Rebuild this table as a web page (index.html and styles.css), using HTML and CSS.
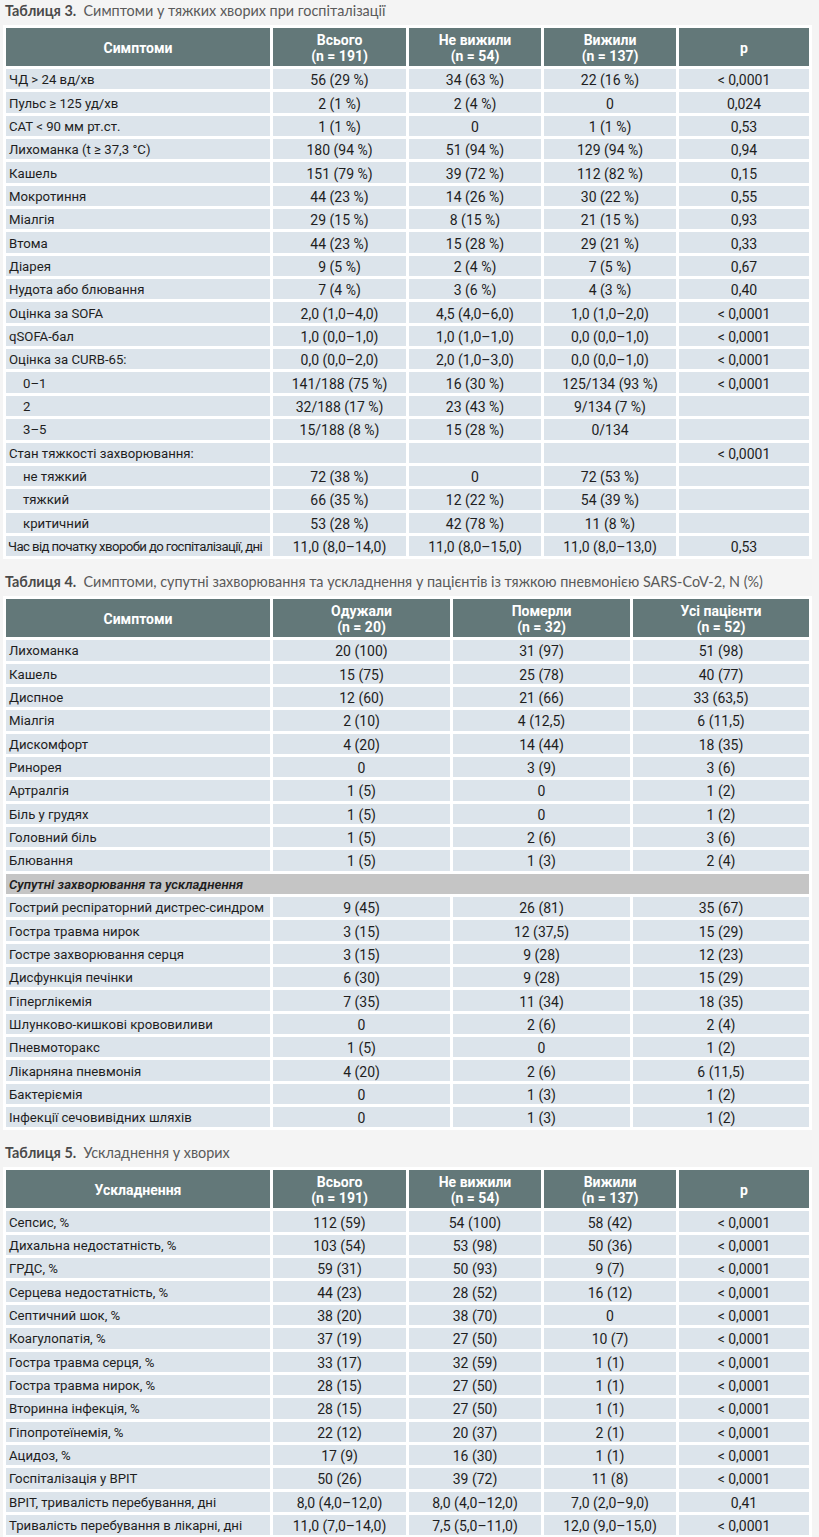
FILE: index.html
```html
<!DOCTYPE html>
<html lang="uk">
<head>
<meta charset="utf-8">
<title>Таблиці</title>
<link rel="stylesheet" href="styles.css">
</head>
<body>
<div class="page">

<div class="cap"><b>Таблиця 3.</b>&nbsp; Симптоми у тяжких хворих при госпіталізації</div>
<table class="t">
<colgroup><col class="c1"><col class="cn"><col class="cn2"><col class="cn2"><col></colgroup>
<thead><tr><th>Симптоми</th><th>Всього<br>(n = 191)</th><th>Не вижили<br>(n = 54)</th><th>Вижили<br>(n = 137)</th><th>p</th></tr></thead>
<tbody>
<tr><td>ЧД &gt; 24 вд/хв</td><td>56 (29 %)</td><td>34 (63 %)</td><td>22 (16 %)</td><td>&lt; 0,0001</td></tr>
<tr><td>Пульс ≥ 125 уд/хв</td><td>2 (1 %)</td><td>2 (4 %)</td><td>0</td><td>0,024</td></tr>
<tr><td>САТ &lt; 90 мм рт.ст.</td><td>1 (1 %)</td><td>0</td><td>1 (1 %)</td><td>0,53</td></tr>
<tr><td>Лихоманка (t ≥ 37,3 °C)</td><td>180 (94 %)</td><td>51 (94 %)</td><td>129 (94 %)</td><td>0,94</td></tr>
<tr><td>Кашель</td><td>151 (79 %)</td><td>39 (72 %)</td><td>112 (82 %)</td><td>0,15</td></tr>
<tr><td>Мокротиння</td><td>44 (23 %)</td><td>14 (26 %)</td><td>30 (22 %)</td><td>0,55</td></tr>
<tr><td>Міалгія</td><td>29 (15 %)</td><td>8 (15 %)</td><td>21 (15 %)</td><td>0,93</td></tr>
<tr><td>Втома</td><td>44 (23 %)</td><td>15 (28 %)</td><td>29 (21 %)</td><td>0,33</td></tr>
<tr><td>Діарея</td><td>9 (5 %)</td><td>2 (4 %)</td><td>7 (5 %)</td><td>0,67</td></tr>
<tr><td>Нудота або блювання</td><td>7 (4 %)</td><td>3 (6 %)</td><td>4 (3 %)</td><td>0,40</td></tr>
<tr><td>Оцінка за SOFA</td><td>2,0 (1,0–4,0)</td><td>4,5 (4,0–6,0)</td><td>1,0 (1,0–2,0)</td><td>&lt; 0,0001</td></tr>
<tr><td>qSOFA-бал</td><td>1,0 (0,0–1,0)</td><td>1,0 (1,0–1,0)</td><td>0,0 (0,0–1,0)</td><td>&lt; 0,0001</td></tr>
<tr><td>Оцінка за CURB-65:</td><td>0,0 (0,0–2,0)</td><td>2,0 (1,0–3,0)</td><td>0,0 (0,0–1,0)</td><td>&lt; 0,0001</td></tr>
<tr><td class="ind">0–1</td><td>141/188 (75 %)</td><td>16 (30 %)</td><td>125/134 (93 %)</td><td>&lt; 0,0001</td></tr>
<tr><td class="ind">2</td><td>32/188 (17 %)</td><td>23 (43 %)</td><td>9/134 (7 %)</td><td></td></tr>
<tr><td class="ind">3–5</td><td>15/188 (8 %)</td><td>15 (28 %)</td><td>0/134</td><td></td></tr>
<tr><td>Стан тяжкості захворювання:</td><td></td><td></td><td></td><td>&lt; 0,0001</td></tr>
<tr><td class="ind">не тяжкий</td><td>72 (38 %)</td><td>0</td><td>72 (53 %)</td><td></td></tr>
<tr><td class="ind">тяжкий</td><td>66 (35 %)</td><td>12 (22 %)</td><td>54 (39 %)</td><td></td></tr>
<tr><td class="ind">критичний</td><td>53 (28 %)</td><td>42 (78 %)</td><td>11 (8 %)</td><td></td></tr>
<tr><td class="tight">Час від початку хвороби до госпіталізації, дні</td><td>11,0 (8,0–14,0)</td><td>11,0 (8,0–15,0)</td><td>11,0 (8,0–13,0)</td><td>0,53</td></tr>
</tbody>
</table>

<div class="cap"><b>Таблиця 4.</b>&nbsp; Симптоми, супутні захворювання та ускладнення у пацієнтів із тяжкою пневмонією SARS-CoV-2, N (%)</div>
<table class="t">
<colgroup><col class="c1"><col class="c4"><col class="c4"><col></colgroup>
<thead><tr><th>Симптоми</th><th>Одужали<br>(n = 20)</th><th>Померли<br>(n = 32)</th><th>Усі пацієнти<br>(n = 52)</th></tr></thead>
<tbody>
<tr><td>Лихоманка</td><td>20 (100)</td><td>31 (97)</td><td>51 (98)</td></tr>
<tr><td>Кашель</td><td>15 (75)</td><td>25 (78)</td><td>40 (77)</td></tr>
<tr><td>Диспное</td><td>12 (60)</td><td>21 (66)</td><td>33 (63,5)</td></tr>
<tr><td>Міалгія</td><td>2 (10)</td><td>4 (12,5)</td><td>6 (11,5)</td></tr>
<tr><td>Дискомфорт</td><td>4 (20)</td><td>14 (44)</td><td>18 (35)</td></tr>
<tr><td>Ринорея</td><td>0</td><td>3 (9)</td><td>3 (6)</td></tr>
<tr><td>Артралгія</td><td>1 (5)</td><td>0</td><td>1 (2)</td></tr>
<tr><td>Біль у грудях</td><td>1 (5)</td><td>0</td><td>1 (2)</td></tr>
<tr><td>Головний біль</td><td>1 (5)</td><td>2 (6)</td><td>3 (6)</td></tr>
<tr><td>Блювання</td><td>1 (5)</td><td>1 (3)</td><td>2 (4)</td></tr>
<tr class="sec"><td colspan="4">Супутні захворювання та ускладнення</td></tr>
<tr><td>Гострий респіраторний дистрес-синдром</td><td>9 (45)</td><td>26 (81)</td><td>35 (67)</td></tr>
<tr><td>Гостра травма нирок</td><td>3 (15)</td><td>12 (37,5)</td><td>15 (29)</td></tr>
<tr><td>Гостре захворювання серця</td><td>3 (15)</td><td>9 (28)</td><td>12 (23)</td></tr>
<tr><td>Дисфункція печінки</td><td>6 (30)</td><td>9 (28)</td><td>15 (29)</td></tr>
<tr><td>Гіперглікемія</td><td>7 (35)</td><td>11 (34)</td><td>18 (35)</td></tr>
<tr><td>Шлунково-кишкові крововиливи</td><td>0</td><td>2 (6)</td><td>2 (4)</td></tr>
<tr><td>Пневмоторакс</td><td>1 (5)</td><td>0</td><td>1 (2)</td></tr>
<tr><td>Лікарняна пневмонія</td><td>4 (20)</td><td>2 (6)</td><td>6 (11,5)</td></tr>
<tr><td>Бактеріємія</td><td>0</td><td>1 (3)</td><td>1 (2)</td></tr>
<tr><td>Інфекції сечовивідних шляхів</td><td>0</td><td>1 (3)</td><td>1 (2)</td></tr>
</tbody>
</table>

<div class="cap"><b>Таблиця 5.</b>&nbsp; Ускладнення у хворих</div>
<table class="t">
<colgroup><col class="c1"><col class="cn"><col class="cn2"><col class="cn2"><col></colgroup>
<thead><tr><th>Ускладнення</th><th>Всього<br>(n = 191)</th><th>Не вижили<br>(n = 54)</th><th>Вижили<br>(n = 137)</th><th>p</th></tr></thead>
<tbody>
<tr><td>Сепсис, %</td><td>112 (59)</td><td>54 (100)</td><td>58 (42)</td><td>&lt; 0,0001</td></tr>
<tr><td>Дихальна недостатність, %</td><td>103 (54)</td><td>53 (98)</td><td>50 (36)</td><td>&lt; 0,0001</td></tr>
<tr><td>ГРДС, %</td><td>59 (31)</td><td>50 (93)</td><td>9 (7)</td><td>&lt; 0,0001</td></tr>
<tr><td>Серцева недостатність, %</td><td>44 (23)</td><td>28 (52)</td><td>16 (12)</td><td>&lt; 0,0001</td></tr>
<tr><td>Септичний шок, %</td><td>38 (20)</td><td>38 (70)</td><td>0</td><td>&lt; 0,0001</td></tr>
<tr><td>Коагулопатія, %</td><td>37 (19)</td><td>27 (50)</td><td>10 (7)</td><td>&lt; 0,0001</td></tr>
<tr><td>Гостра травма серця, %</td><td>33 (17)</td><td>32 (59)</td><td>1 (1)</td><td>&lt; 0,0001</td></tr>
<tr><td>Гостра травма нирок, %</td><td>28 (15)</td><td>27 (50)</td><td>1 (1)</td><td>&lt; 0,0001</td></tr>
<tr><td>Вторинна інфекція, %</td><td>28 (15)</td><td>27 (50)</td><td>1 (1)</td><td>&lt; 0,0001</td></tr>
<tr><td>Гіпопротеїнемія, %</td><td>22 (12)</td><td>20 (37)</td><td>2 (1)</td><td>&lt; 0,0001</td></tr>
<tr><td>Ацидоз, %</td><td>17 (9)</td><td>16 (30)</td><td>1 (1)</td><td>&lt; 0,0001</td></tr>
<tr><td>Госпіталізація у ВРІТ</td><td>50 (26)</td><td>39 (72)</td><td>11 (8)</td><td>&lt; 0,0001</td></tr>
<tr><td>ВРІТ, тривалість перебування, дні</td><td>8,0 (4,0–12,0)</td><td>8,0 (4,0–12,0)</td><td>7,0 (2,0–9,0)</td><td>0,41</td></tr>
<tr><td>Тривалість перебування в лікарні, дні</td><td>11,0 (7,0–14,0)</td><td>7,5 (5,0–11,0)</td><td>12,0 (9,0–15,0)</td><td>&lt; 0,0001</td></tr>
</tbody>
</table>

</div>
</body>
</html>
```

FILE: styles.css
```css
html, body {
  margin: 0;
  padding: 0;
  background: #f4f4f4;
}

.page {
  padding: 1px 0 0 3px;
  font-family: Roboto, "Liberation Sans", sans-serif;
  color: #1e1e1e;
}

.cap {
  font-family: Lato, "Noto Sans", sans-serif;
  font-size: 14.4px;
  line-height: 20px;
  color: #5a5a5a;
  padding-left: 2px;
  margin-bottom: 4px;
}
.cap b {
  font-weight: 700;
  color: #4a4a4a;
}

.t {
  width: 809px;
  table-layout: fixed;
  border-collapse: separate;
  border-spacing: 3px;
  background: #ffffff;
  margin-bottom: 13px;
  font-size: 14px;
}

.c1 { width: 264px; }
.cn { width: 133px; }
.cn2 { width: 132px; }
.c4 { width: 177px; }

.t th {
  background: #637879;
  color: #ffffff;
  font-weight: 700;
  font-size: 14px;
  line-height: 16px;
  height: 37px;
  padding: 1px 2px 0;
  text-align: center;
  vertical-align: middle;
}

.t td {
  background: #dce4eb;
  height: 18.35px;
  padding: 2px 2px 0;
  line-height: 16px;
  text-align: center;
  vertical-align: middle;
  white-space: nowrap;
}

.t td:first-child {
  text-align: left;
  padding-left: 3px;
  font-size: 13.2px;
}

.t td.ind {
  padding-left: 17px;
}

.t td.tight {
  letter-spacing: -0.6px;
  padding-left: 2px;
}

.t tr.sec td {
  background: #c5c5c5;
  font-style: italic;
  font-weight: 600;
}
```
